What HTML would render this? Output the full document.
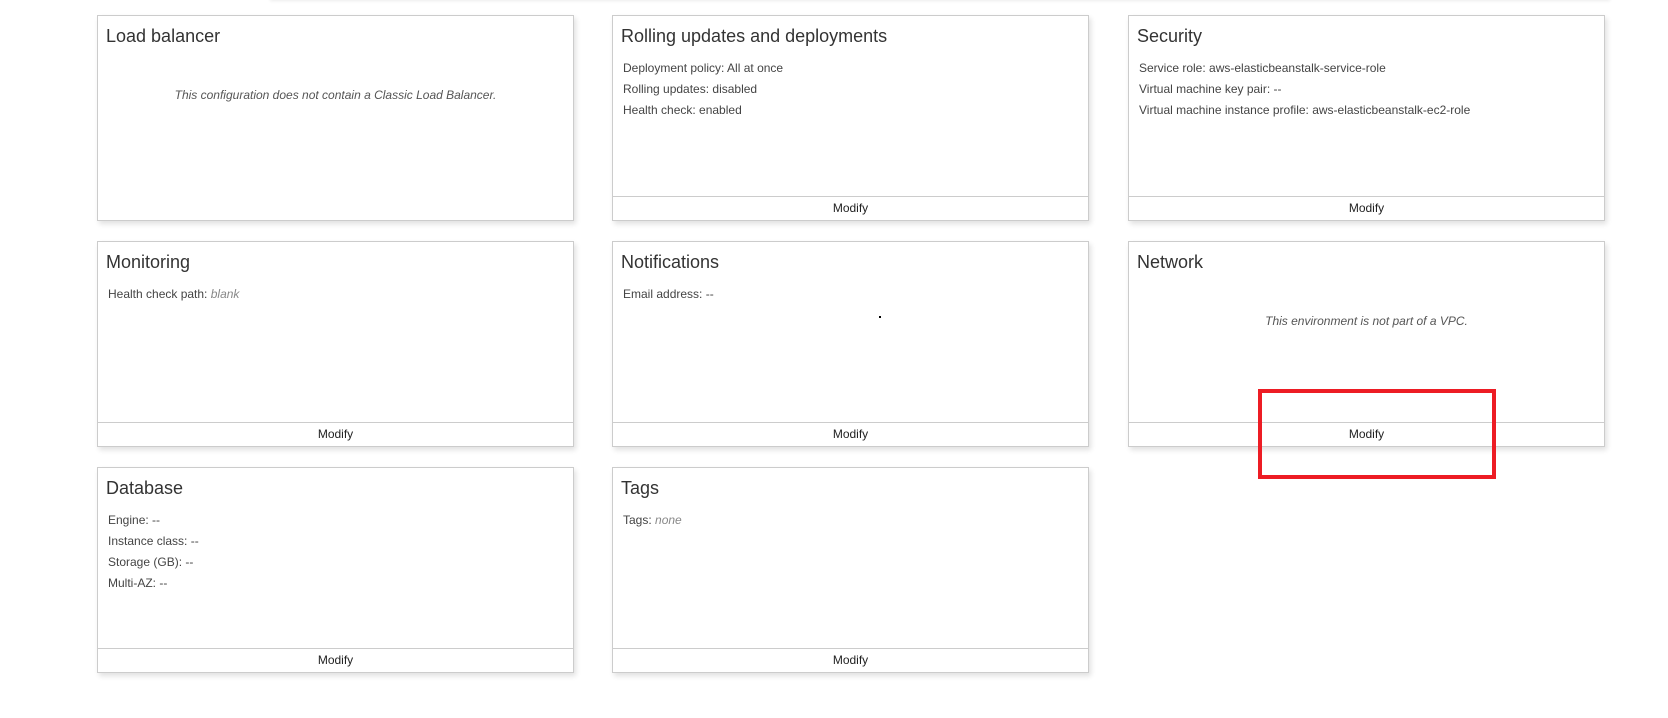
<!DOCTYPE html>
<html><head><style>
body{margin:0;width:1668px;height:718px;background:#fff;font-family:"Liberation Sans",Arial,sans-serif;position:relative;overflow:hidden;color:#333}
.top{position:absolute;left:270px;top:-10px;width:1340px;height:10px;box-shadow:0 1px 3px rgba(0,0,0,.08)}
.card{position:absolute;width:477px;height:206px;border:1px solid #ccc;box-shadow:2px 3px 5px rgba(0,0,0,.12);background:#fff;box-sizing:border-box}
.card h3{margin:0;position:absolute;left:8px;top:10px;font-size:18px;font-weight:normal;color:#333}
.body{position:absolute;left:10px;top:42px;font-size:12px;line-height:21px;color:#444}
.body i{color:#888}
.msg{position:absolute;left:0;right:0;top:72px;text-align:center;font-style:italic;font-size:12px;color:#555}
.foot{position:absolute;left:0;right:0;bottom:0;height:23px;border-top:1px solid #ccc;text-align:center;line-height:23px;font-size:12px;color:#222}
.red{position:absolute;left:1258px;top:389px;width:238px;height:90px;border:4px solid #ed1c24;box-sizing:border-box}
</style></head><body>
<div class="top"></div>
<div class="card" style="left:97px;top:15px"><h3>Load balancer</h3><div class="msg">This configuration does not contain a Classic Load Balancer.</div></div>
<div class="card" style="left:612px;top:15px"><h3>Rolling updates and deployments</h3><div class="body">Deployment policy: All at once<br>Rolling updates: disabled<br>Health check: enabled</div><div class="foot">Modify</div></div>
<div class="card" style="left:1128px;top:15px"><h3>Security</h3><div class="body">Service role: aws-elasticbeanstalk-service-role<br>Virtual machine key pair: --<br>Virtual machine instance profile: aws-elasticbeanstalk-ec2-role</div><div class="foot">Modify</div></div>
<div class="card" style="left:97px;top:241px"><h3>Monitoring</h3><div class="body">Health check path: <i>blank</i></div><div class="foot">Modify</div></div>
<div class="card" style="left:612px;top:241px"><h3>Notifications</h3><div class="body">Email address: --</div><div style="position:absolute;left:266px;top:74px;width:2px;height:2px;background:#000"></div><div class="foot">Modify</div></div>
<div class="card" style="left:1128px;top:241px"><h3>Network</h3><div class="msg">This environment is not part of a VPC.</div><div class="foot">Modify</div></div>
<div class="card" style="left:97px;top:467px"><h3>Database</h3><div class="body">Engine: --<br>Instance class: --<br>Storage (GB): --<br>Multi-AZ: --</div><div class="foot">Modify</div></div>
<div class="card" style="left:612px;top:467px"><h3>Tags</h3><div class="body">Tags: <i>none</i></div><div class="foot">Modify</div></div>
<div class="red"></div>
</body></html>
